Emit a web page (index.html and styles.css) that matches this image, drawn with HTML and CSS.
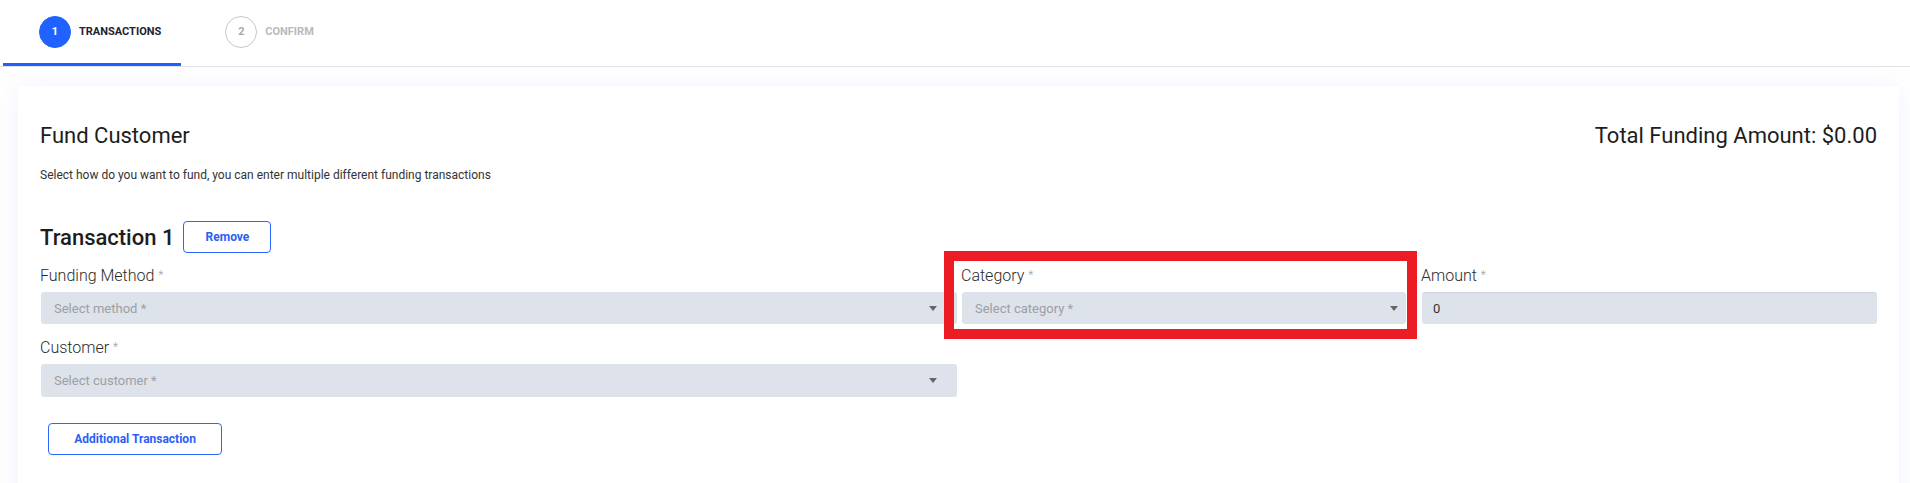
FILE: index.html
```html
<!DOCTYPE html>
<html lang="en">
<head>
    <meta charset="UTF-8">
    <meta name="viewport" content="width=device-width, initial-scale=1.0">
    <title>Fund Customer</title>
    <link rel="stylesheet" href="styles.css">
</head>
<body>
    <div class="steps">
        <div class="step active">
            <span class="step-num">1</span>
            <span class="step-label">Transactions</span>
        </div>
        <div class="step">
            <span class="step-num">2</span>
            <span class="step-label">Confirm</span>
        </div>
    </div>

    <div class="card">
        <div class="card-header">
            <h1>Fund Customer</h1>
            <div class="total">Total Funding Amount: $0.00</div>
        </div>
        <p class="hint">Select how do you want to fund, you can enter multiple different funding transactions</p>

        <div class="transaction">
            <div class="transaction-head">
                <h2>Transaction 1</h2>
                <button class="outline-btn remove-btn">Remove</button>
            </div>

            <div class="fields-row">
                <div class="field">
                    <label>Funding Method <span class="req">*</span></label>
                    <div class="select">
                        <span class="placeholder">Select method *</span>
                        <span class="caret"></span>
                    </div>
                </div>
                <div class="field field-category">
                    <label>Category <span class="req">*</span></label>
                    <div class="select">
                        <span class="placeholder">Select category *</span>
                        <span class="caret"></span>
                    </div>
                    <div class="highlight"></div>
                </div>
                <div class="field field-amount">
                    <label>Amount <span class="req">*</span></label>
                    <input type="text" class="input" value="0">
                </div>
            </div>

            <div class="fields-row second">
                <div class="field">
                    <label>Customer <span class="req">*</span></label>
                    <div class="select">
                        <span class="placeholder">Select customer *</span>
                        <span class="caret"></span>
                    </div>
                </div>
            </div>
        </div>

        <button class="outline-btn add-btn">Additional Transaction</button>
    </div>
</body>
</html>
```

FILE: styles.css
```css
* {
    margin: 0;
    padding: 0;
    box-sizing: border-box;
}

body {
    font-family: Roboto, 'Liberation Sans', sans-serif;
    background: #fff;
    color: #222;
    overflow: hidden;
}

/* stepper */
.steps {
    display: flex;
    padding-left: 3px;
    border-bottom: 1px solid #e2e2e2;
}

.step {
    display: flex;
    align-items: center;
    gap: 8px;
    height: 66px;
    padding: 0 20px 0 36px;
    border-bottom: 3px solid transparent;
}

.step + .step {
    margin-left: 8px;
}

.step-num {
    width: 32px;
    height: 32px;
    border-radius: 50%;
    border: 1px solid #c8c8c8;
    color: #a8a8a8;
    font-size: 11px;
    font-weight: 700;
    display: flex;
    align-items: center;
    justify-content: center;
}

.step-label {
    font-size: 11px;
    font-weight: 700;
    text-transform: uppercase;
    color: #b9b9b9;
}

.step.active {
    border-bottom-color: #1f5fff;
}

.step.active .step-num {
    background: #1f62ff;
    border-color: #1f62ff;
    color: #fff;
}

.step.active .step-label {
    color: #1c2333;
}

/* card */
.card {
    margin: 19px 11px 0 18px;
    padding: 37px 22px 60px 22px;
    background: #fff;
    box-shadow: 0 0 22px rgba(70, 95, 255, 0.08);
}

.card-header {
    display: flex;
    justify-content: space-between;
    align-items: baseline;
}

h1, .total {
    font-size: 22px;
    font-weight: 400;
    color: #1d1d1d;
}

.hint {
    font-size: 12px;
    color: #333;
    margin-top: 20px;
}

.transaction {
    margin-top: 39px;
}

.transaction-head {
    display: flex;
    align-items: center;
    gap: 9px;
}

h2 {
    font-size: 22px;
    font-weight: 500;
    color: #1d1d1d;
}

.outline-btn {
    font-family: inherit;
    background: #fff;
    border: 1px solid #2d66ff;
    border-radius: 4px;
    color: #2a60f5;
    font-size: 12px;
    font-weight: 700;
    height: 32px;
    cursor: pointer;
}

.remove-btn {
    width: 88px;
}

.add-btn {
    width: 174px;
    margin: 26px 0 0 8px;
}

/* fields */
.fields-row {
    display: grid;
    grid-template-columns: 917px 445px 1fr;
    column-gap: 4px;
    margin-top: 13px;
}

.fields-row.second {
    margin-top: 14px;
}

.field {
    position: relative;
}

.field-amount {
    margin-left: 11px;
}

.field label {
    display: block;
    font-size: 16px;
    font-weight: 300;
    color: #2b2b2b;
    margin-bottom: 7px;
}

.req {
    font-size: 12px;
    color: #a0a0a0;
    vertical-align: 2px;
}

.select,
.input {
    height: 32px;
    background: #dee2ea;
    border-radius: 3px;
    margin-left: 1px;
    font-family: inherit;
    font-size: 13px;
}

.fields-row.second .select {
    height: 33px;
}

.select {
    display: flex;
    align-items: center;
    justify-content: space-between;
    padding: 0 20px 0 13px;
}

.field-category .select {
    padding-right: 8px;
}

.placeholder {
    color: #9b9fa6;
}

.caret {
    width: 0;
    height: 0;
    border-left: 4px solid transparent;
    border-right: 4px solid transparent;
    border-top: 5px solid #666;
}

.input {
    display: block;
    width: calc(100% - 1px);
    border: none;
    border-top: 1px solid #cdd2dc;
    padding: 0 11px;
    color: #333;
    outline: none;
}

/* annotation frame drawn over the category field */
.highlight {
    position: absolute;
    left: -17px;
    right: -11px;
    top: -15px;
    bottom: -15px;
    border: 10px solid #ec1c24;
    pointer-events: none;
}
```
